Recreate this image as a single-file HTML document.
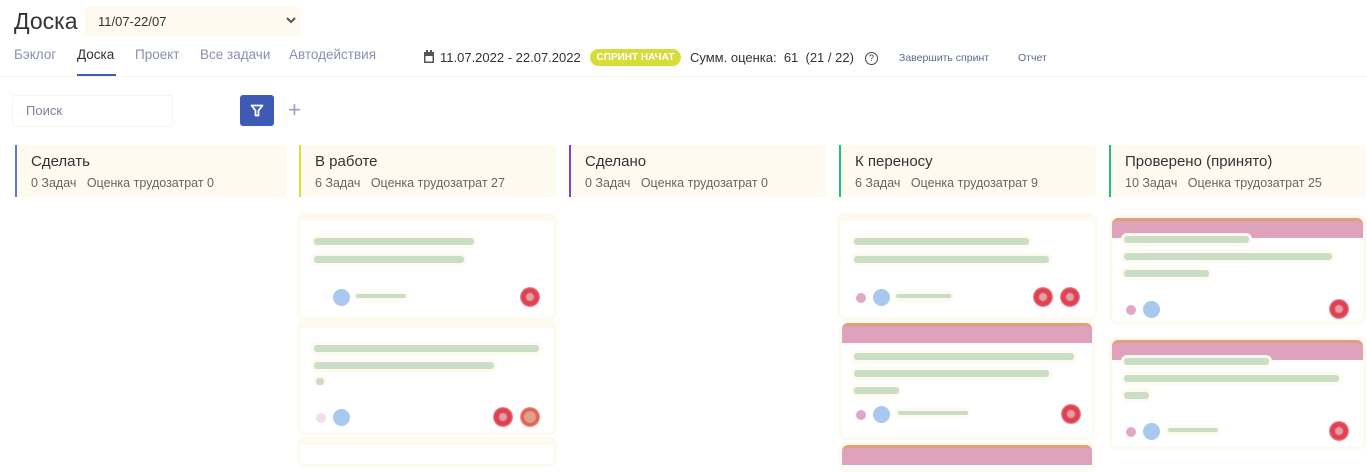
<!DOCTYPE html>
<html><head><meta charset="utf-8"><style>
body{margin:0;width:1367px;height:456px;overflow:hidden;background:#fff;font-family:"Liberation Sans",sans-serif;position:relative;color:#333}
.a{position:absolute}
.tab{position:absolute;top:47px;font-size:13.5px;color:#8a8fb0}
.col{position:absolute;top:145px;height:52px;background:#fffaf0;border-radius:0 4px 4px 0}
.col b{position:absolute;left:14px;top:8px;font-weight:normal;font-size:15px;color:#333}
.col span{position:absolute;left:14px;top:31px;font-size:12.5px;color:#666}
.card{position:absolute;background:#fff;border:3px solid #fffaf0;border-radius:8px;box-sizing:border-box}
.pink{position:absolute;left:0;right:0;top:0;height:17px;background:#dfa2bd;border-top:3px solid #e0a07a;border-radius:6px 6px 0 0}
.ln{position:absolute;height:7px;background:#c9dec4;border-radius:3px;box-shadow:0 0 0 3px #fffaf0}
.av{position:absolute;width:17px;height:17px;border-radius:50%;background:#a8c8f0}
.dot{position:absolute;width:10px;height:10px;border-radius:50%;background:#e0a8c8}
.red{position:absolute;width:20px;height:20px;border-radius:50%;background:radial-gradient(circle,#e0a0a8 0 3px,#e04050 5px 8px,#e890a0 10px)}
</style></head><body>
<div class="a" style="left:14px;top:8px;font-size:23px;color:#333">Доска</div>
<div class="a" style="left:85px;top:7px;width:215px;height:29px;background:#fffaf0;border-radius:3px"></div>
<div class="a" style="left:98px;top:14px;font-size:13px;color:#333">11/07-22/07</div>
<svg class="a" style="left:285px;top:17px" width="12" height="8"><path d="M2 1l4 4 4-4" stroke="#555" stroke-width="2" fill="none"/></svg>
<div class="tab" style="left:14px">Бэклог</div>
<div class="tab" style="left:77px;color:#333">Доска</div>
<div class="a" style="left:77px;top:74px;width:39px;height:2px;background:#3d5bb5"></div>
<div class="tab" style="left:135px">Проект</div>
<div class="tab" style="left:200px">Все задачи</div>
<div class="tab" style="left:289px">Автодействия</div>
<svg class="a" style="left:423px;top:50px" width="12" height="14"><rect x="1" y="2" width="10" height="11" fill="#555"/><rect x="2.5" y="6" width="7" height="5.5" fill="#fff"/><rect x="3" y="0" width="2" height="3" fill="#555"/><rect x="7" y="0" width="2" height="3" fill="#555"/></svg>
<div class="a" style="left:440px;top:50px;font-size:13px;color:#333">11.07.2022 - 22.07.2022</div>
<div class="a" style="left:590px;top:49px;width:91px;height:17px;border-radius:9px;background:#d6dc3a;color:#fff;font-size:10px;font-weight:bold;text-align:center;line-height:17px">СПРИНТ НАЧАТ</div>
<div class="a" style="left:690px;top:50px;font-size:13px;color:#333">Сумм. оценка:&nbsp; 61 &nbsp;(21 / 22)</div>
<div class="a" style="left:865px;top:52px;width:11px;height:11px;border:1.3px solid #444;border-radius:50%;font-size:9px;line-height:11px;text-align:center;color:#444">?</div>
<div class="a" style="left:899px;top:52px;font-size:10.5px;color:#5a6a90">Завершить спринт</div>
<div class="a" style="left:1018px;top:52px;font-size:10.5px;color:#5a6a90">Отчет</div>
<div class="a" style="left:0;top:76px;width:1367px;height:1px;background:#fdf6e6"></div>
<div class="a" style="left:12px;top:95px;width:159px;height:30px;border:1px solid #fbf4e6;border-radius:3px"></div>
<div class="a" style="left:26px;top:103px;font-size:13px;color:#8a7a9a">Поиск</div>
<div class="a" style="left:240px;top:95px;width:34px;height:31px;background:#3d5bb5;border-radius:3px"></div>
<svg class="a" style="left:250px;top:104px" width="14" height="13"><path d="M1.5 1.5h11l-4 5v5h-3v-5z" stroke="#fff" stroke-width="1.8" fill="none" stroke-linejoin="round"/></svg>
<div class="a" style="left:288px;top:97px;font-size:22px;color:#9aa0c0">+</div>

<div class="col" style="left:15px;width:270px;border-left:2px solid #5a7acc"><b>Сделать</b><span>0 Задач&nbsp;&nbsp; Оценка трудозатрат 0</span></div>
<div class="col" style="left:299px;width:255px;border-left:2px solid #dcdc3a"><b>В работе</b><span>6 Задач&nbsp;&nbsp; Оценка трудозатрат 27</span></div>
<div class="col" style="left:569px;width:255px;border-left:2px solid #8040c8"><b>Сделано</b><span>0 Задач&nbsp;&nbsp; Оценка трудозатрат 0</span></div>
<div class="col" style="left:839px;width:255px;border-left:2px solid #20c080"><b>К переносу</b><span>6 Задач&nbsp;&nbsp; Оценка трудозатрат 9</span></div>
<div class="col" style="left:1109px;width:255px;border-left:2px solid #20c080"><b>Проверено (принято)</b><span>10 Задач&nbsp;&nbsp; Оценка трудозатрат 25</span></div>

<div class="card" style="left:297px;top:213px;width:260px;height:107px;border-top-width:8px">
<div class="ln" style="left:14px;top:17px;width:160px"></div><div class="ln" style="left:14px;top:35px;width:150px"></div>
<div class="av" style="left:33px;top:68px"></div><div class="ln" style="left:56px;top:73px;width:50px;height:4px"></div>
<div class="red" style="left:220px;top:66px"></div></div>
<div class="card" style="left:297px;top:320px;width:260px;height:115px;border-top-width:8px">
<div class="ln" style="left:14px;top:17px;width:225px"></div><div class="ln" style="left:14px;top:34px;width:180px"></div><div class="ln" style="left:16px;top:50px;width:8px"></div>
<div class="dot" style="left:16px;top:85px;background:#f0e0e8"></div><div class="av" style="left:33px;top:81px"></div>
<div class="red" style="left:193px;top:79px"></div><div class="red" style="left:220px;top:79px;background:radial-gradient(circle,#e0a090 0 5px,#e06050 7px 8px,#f0a080 10px)"></div></div>
<div class="card" style="left:297px;top:437px;width:260px;height:30px;border-top-width:8px"></div>

<div class="card" style="left:837px;top:213px;width:260px;height:107px;border-top-width:8px">
<div class="ln" style="left:14px;top:17px;width:175px"></div><div class="ln" style="left:14px;top:35px;width:195px"></div>
<div class="dot" style="left:16px;top:72px"></div><div class="av" style="left:33px;top:68px"></div><div class="ln" style="left:56px;top:73px;width:55px;height:4px"></div>
<div class="red" style="left:193px;top:66px"></div><div class="red" style="left:220px;top:66px"></div></div>
<div class="card" style="left:839px;top:320px;width:256px;height:120px"><div class="pink"></div>
<div class="ln" style="left:12px;top:30px;width:220px"></div><div class="ln" style="left:12px;top:47px;width:195px"></div><div class="ln" style="left:12px;top:64px;width:45px"></div>
<div class="dot" style="left:14px;top:87px"></div><div class="av" style="left:31px;top:83px"></div><div class="ln" style="left:56px;top:88px;width:70px;height:4px"></div>
<div class="red" style="left:219px;top:81px"></div></div>
<div class="card" style="left:839px;top:442px;width:256px;height:30px"><div class="pink"></div></div>

<div class="card" style="left:1109px;top:215px;width:257px;height:110px"><div class="pink"></div>
<div class="ln" style="left:12px;top:18px;width:125px"></div><div class="ln" style="left:12px;top:35px;width:208px"></div><div class="ln" style="left:12px;top:52px;width:85px"></div>
<div class="dot" style="left:14px;top:87px"></div><div class="av" style="left:31px;top:83px"></div>
<div class="red" style="left:217px;top:81px"></div></div>
<div class="card" style="left:1109px;top:337px;width:257px;height:113px"><div class="pink"></div>
<div class="ln" style="left:12px;top:18px;width:145px"></div><div class="ln" style="left:12px;top:35px;width:215px"></div><div class="ln" style="left:12px;top:52px;width:25px"></div>
<div class="dot" style="left:14px;top:87px"></div><div class="av" style="left:31px;top:83px"></div><div class="ln" style="left:56px;top:88px;width:50px;height:4px"></div>
<div class="red" style="left:217px;top:81px"></div></div>
</body></html>
